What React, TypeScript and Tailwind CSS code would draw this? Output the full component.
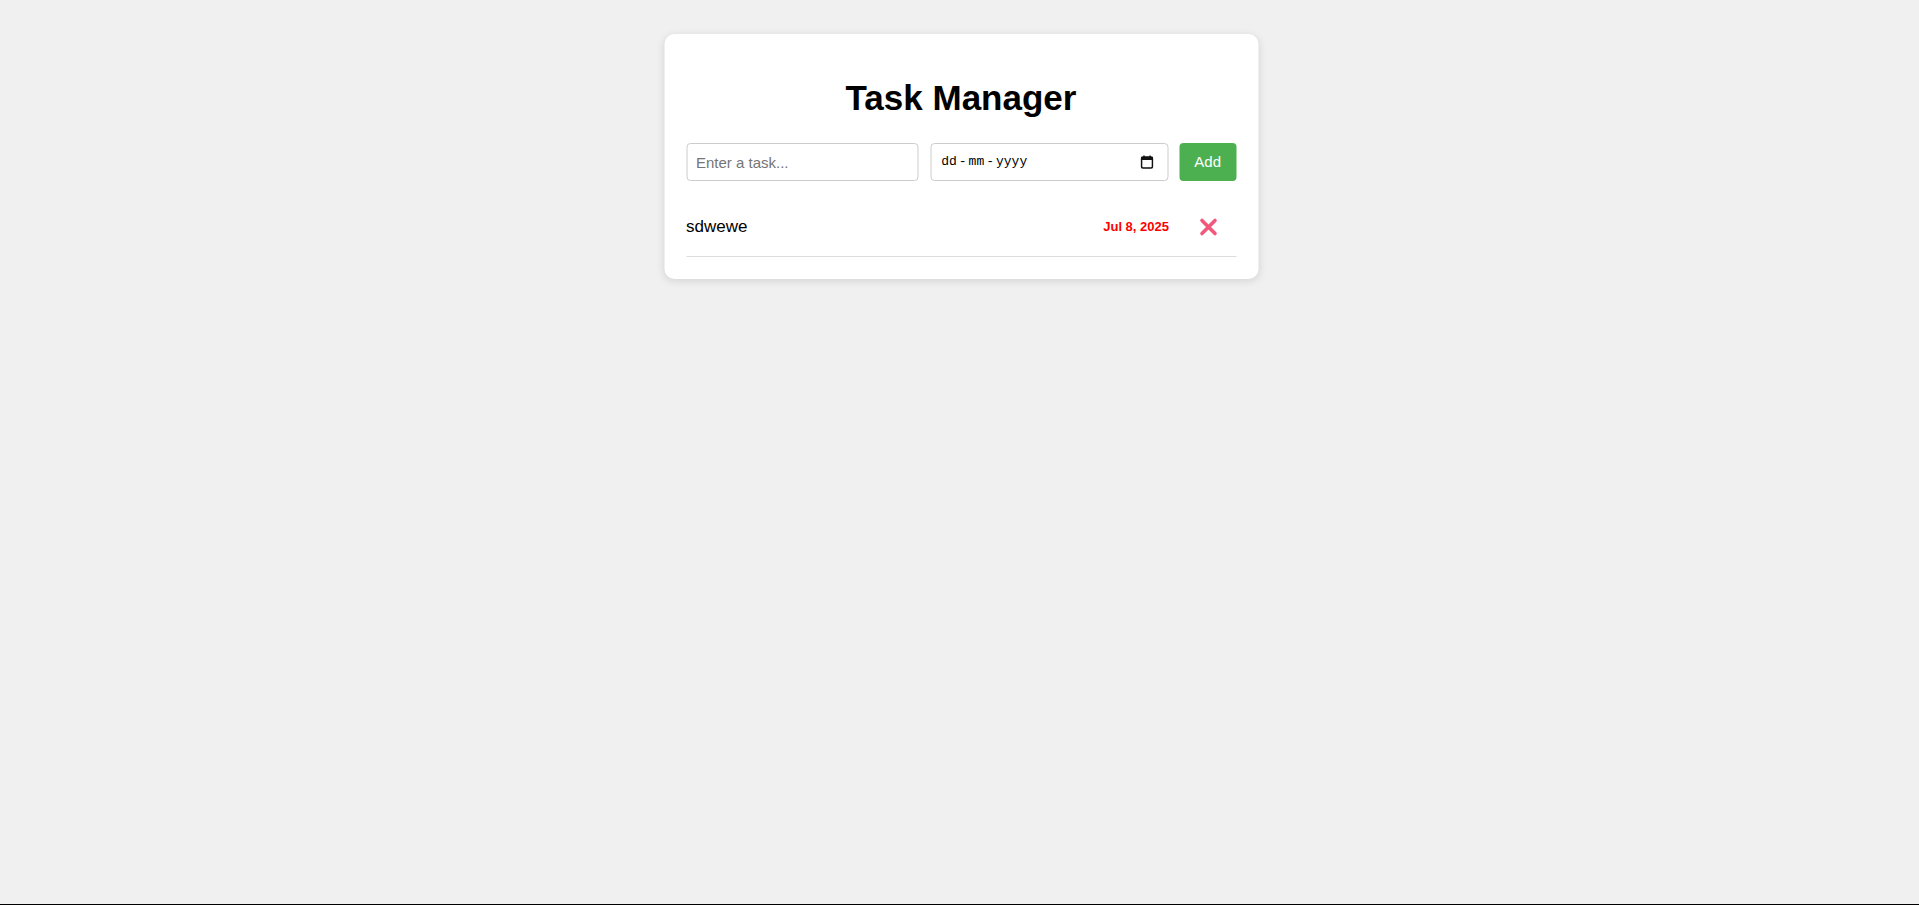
import { useState } from "react";

type Task = {
  id: number;
  text: string;
  date: string;
};

const CalendarIcon = () => (
  <svg width="13" height="14" viewBox="0 0 13 14" fill="none">
    <rect x="1" y="2" width="11" height="11" rx="1.5" stroke="#111" strokeWidth="1.6" />
    <rect x="1" y="2" width="11" height="3" fill="#111" />
    <line x1="3.5" y1="0.5" x2="3.5" y2="3" stroke="#111" strokeWidth="1.4" />
    <line x1="9.5" y1="0.5" x2="9.5" y2="3" stroke="#111" strokeWidth="1.4" />
  </svg>
);

const CrossIcon = () => (
  <svg width="20" height="20" viewBox="0 0 20 20">
    <path d="M3.5 3.5 L16.5 16.5 M16.5 3.5 L3.5 16.5" stroke="#f2587b" strokeWidth="3.6" strokeLinecap="round" />
  </svg>
);

const App = () => {
  const [tasks, setTasks] = useState<Task[]>([{ id: 1, text: "sdwewe", date: "Jul 8, 2025" }]);
  const [text, setText] = useState("");

  const addTask = () => {
    if (!text.trim()) return;
    setTasks([...tasks, { id: Date.now(), text, date: "Jul 8, 2025" }]);
    setText("");
  };

  return (
    <div className="h-[905px] flex flex-col bg-[#f0f0f0] font-['Liberation_Sans',Arial,sans-serif]">
      <div className="flex-1 pt-[34px]">
        <div className="w-[594px] mx-auto translate-x-[1.5px] bg-white rounded-[10px] shadow-[0_2px_8px_rgba(0,0,0,0.12)] p-[22px]">
          <h1 className="mt-[22px] mb-[25px] text-center text-[35px] leading-[40px] font-bold text-black">
            Task Manager
          </h1>

          <div className="flex items-center">
            <input
              value={text}
              onChange={(e) => setText(e.target.value)}
              placeholder="Enter a task..."
              className="flex-1 min-w-0 h-[38px] px-[9px] border border-[#cccccc] rounded-[4px] text-[15px] text-black placeholder:text-[#757575] outline-none"
            />
            <div className="flex-1 min-w-0 ml-[12px] h-[38px] pl-[10px] pr-[14px] border border-[#cccccc] rounded-[4px] flex items-center justify-between">
              <div className="flex items-center gap-[2px] font-['Liberation_Mono',monospace] text-[13px] text-black">
                <span>dd</span>
                <span>-</span>
                <span>mm</span>
                <span>-</span>
                <span>yyyy</span>
              </div>
              <CalendarIcon />
            </div>
            <button
              onClick={addTask}
              className="ml-[11px] h-[38px] px-[15px] bg-[#4caf50] text-white text-[15px] rounded-[4px]"
            >
              Add
            </button>
          </div>

          <ul className="mt-[16px]">
            {tasks.map((task) => (
              <li key={task.id} className="h-[60px] flex items-center border-b border-[#dddddd]">
                <span className="flex-1 text-[17px] text-black">{task.text}</span>
                <span className="text-[13px] font-bold text-[#ff0000]">{task.date}</span>
                <button
                  onClick={() => setTasks(tasks.filter((t) => t.id !== task.id))}
                  className="ml-[29px] mr-[18px] flex items-center"
                >
                  <CrossIcon />
                </button>
              </li>
            ))}
          </ul>
        </div>
      </div>
      <div className="h-px bg-black" />
    </div>
  );
};

export default App;
